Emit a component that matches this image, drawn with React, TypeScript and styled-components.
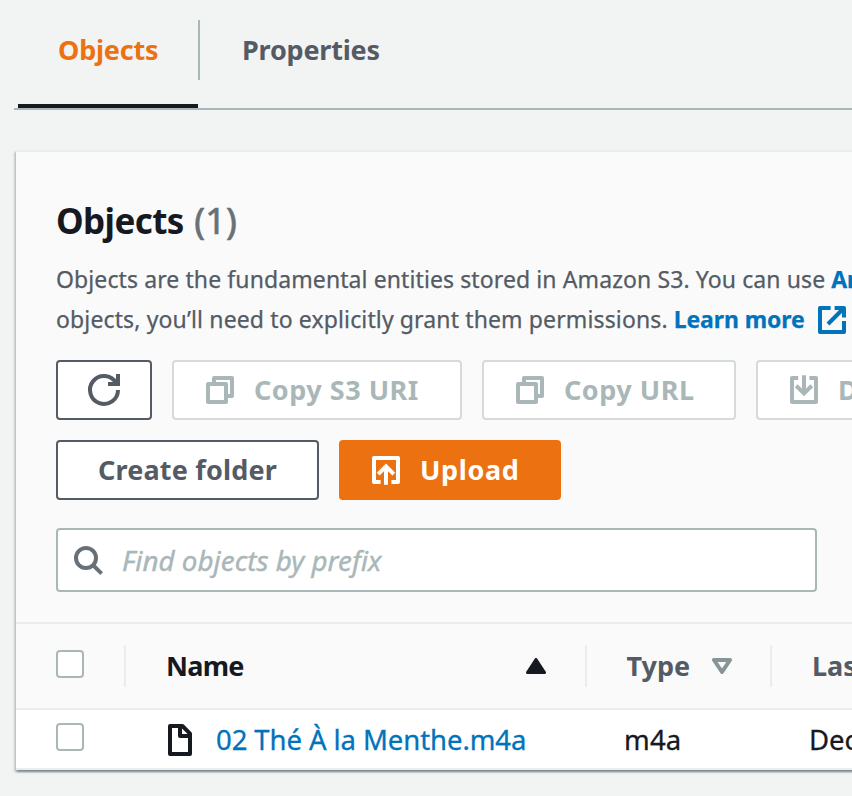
import React from "react";
import styled, { createGlobalStyle } from "styled-components";

const GlobalStyle = createGlobalStyle`
  *, *::before, *::after { box-sizing: border-box; }
  body {
    margin: 0;
    background: #f2f4f3;
    color: #16191f;
    font-family: "Noto Sans", "Open Sans", sans-serif;
    font-size: 27.5px;
    overflow: hidden;
  }
`;

const Page = styled.div`
  height: 796px;
  width: 100%;
  overflow: hidden;
`;

const TabBar = styled.nav`
  display: flex;
  height: 110px;
  margin-left: 14px;
  padding: 20px 0 0 4px;
  border-bottom: 2px solid #aab7b8;
`;

const Tab = styled.a<{ $active?: boolean }>`
  display: flex;
  flex-direction: column;
  justify-content: space-between;
  font-size: 27px;
  font-weight: 700;
  line-height: 60px;
  letter-spacing: -0.2px;
  color: ${(p) => (p.$active ? "#ec7211" : "#545b64")};
  width: ${(p) => (p.$active ? 180 : 220)}px;
  padding-left: ${(p) => (p.$active ? 0 : 44)}px;

  span {
    padding-left: ${(p) => (p.$active ? 40 : 0)}px;
  }

  &::after {
    content: "";
    height: 4px;
    background: ${(p) => (p.$active ? "#16191f" : "transparent")};
  }
`;

const TabDivider = styled.div`
  width: 2px;
  height: 60px;
  margin-right: -2px;
  background: #aab7b8;
`;

const Card = styled.section`
  width: 1000px;
  margin: 40px 0 0 16px;
  border-top: 2px solid #eaeded;
  background: #fafafa;
  box-shadow:
    0 2px 2px rgba(0, 28, 36, 0.3),
    2px 2px 2px rgba(0, 28, 36, 0.15),
    -2px 2px 2px rgba(0, 28, 36, 0.15);
`;

const CardHeader = styled.header`
  height: 472px;
  padding: 39px 0 0 40px;
  border-bottom: 2px solid #eaeded;
`;

const Heading = styled.h2`
  margin: 0 0 8px;
  font-size: 35px;
  line-height: 60px;
  font-weight: 700;
  letter-spacing: -0.6px;
`;

const Counter = styled.span`
  margin-left: 2px;
  font-size: 36px;
  line-height: 1;
  font-weight: 400;
  letter-spacing: 0.2px;
  color: #687078;
  -webkit-text-stroke: 0.7px currentColor;
`;

const Description = styled.p`
  margin: 0 0 21px;
  font-size: 23px;
  line-height: 40px;
  color: #545b64;
  white-space: nowrap;
  -webkit-text-stroke: 0.25px currentColor;
`;

const Line = styled.span<{ $spacing: number }>`
  display: flex;
  align-items: center;
  height: 40px;
  letter-spacing: ${(p) => p.$spacing}px;
`;

const TextLink = styled.a`
  margin-left: 6px;
  font-weight: 700;
  letter-spacing: -0.1px;
  color: #0073bb;
`;

const Glyph = styled.svg`
  flex: none;
  width: 32px;
  height: 32px;
  fill: none;
  stroke: currentColor;
  stroke-width: 2;
  overflow: visible;
`;

const ExternalGlyph = styled(Glyph)`
  margin: 2px 0 0 11px;
  color: #0073bb;
`;

const FileGlyph = styled(Glyph)`
  margin-top: 2px;
`;

const Actions = styled.div`
  display: flex;
  gap: 20px;
  margin-bottom: 20px;
`;

type Variant = "normal" | "disabled" | "primary";
const palette: Record<Variant, { border: string; text: string; fill: string }> = {
  normal: { border: "#545b64", text: "#545b64", fill: "#ffffff" },
  disabled: { border: "#d5dbdb", text: "#aab7b8", fill: "#ffffff" },
  primary: { border: "#ec7211", text: "#ffffff", fill: "#ec7211" },
};

const Button = styled.button<{ $variant: Variant; $width: number; $spacing?: number; $pad?: number }>`
  display: flex;
  flex: none;
  align-items: center;
  gap: 18px;
  width: ${(p) => p.$width}px;
  height: 60px;
  padding: 0 0 0 ${(p) => p.$pad ?? 30}px;
  border: 2px solid ${(p) => palette[p.$variant].border};
  border-radius: 4px;
  background: ${(p) => palette[p.$variant].fill};
  color: ${(p) => palette[p.$variant].text};
  font: inherit;
  font-size: 27px;
  font-weight: 700;
  letter-spacing: ${(p) => p.$spacing ?? 0.52}px;
  white-space: nowrap;

  span {
    line-height: 38px;
  }
`;

const SearchBox = styled.label`
  display: flex;
  align-items: center;
  gap: 18px;
  width: 761px;
  height: 64px;
  margin-top: 28px;
  padding-left: 14px;
  border: 2px solid #aab7b8;
  border-radius: 4px;
  background: #fff;
  color: #687078;
`;

const SearchInput = styled.input`
  flex: 1;
  height: 58px;
  padding: 0;
  border: 0;
  outline: 0;
  background: transparent;
  font: italic 400 27.8px "Noto Sans", sans-serif;

  &::placeholder {
    color: #aab7b8;
    opacity: 1;
    -webkit-text-stroke: 0.4px currentColor;
  }
`;

const GridRow = styled.div<{ $head?: boolean }>`
  display: grid;
  grid-template-columns: 110px 461px 185px 244px;
  align-items: center;
  height: ${(p) => (p.$head ? 86 : 60)}px;
  border-bottom: 2px solid #eaeded;
  background: ${(p) => (p.$head ? "#fafafa" : "#ffffff")};
  white-space: nowrap;
`;

const HeadCell = styled.div<{ $spacing?: number; $muted?: boolean; $pad: number }>`
  display: flex;
  align-items: center;
  justify-content: space-between;
  height: 42px;
  padding: 0 ${(p) => (p.$muted ? 38 : 39)}px 0 ${(p) => p.$pad}px;
  border-right: 2px solid #eaeded;
  font-size: 27px;
  font-weight: 700;
  letter-spacing: ${(p) => p.$spacing ?? 0}px;
  color: ${(p) => (p.$muted ? "#545b64" : "#16191f")};
`;

const HeadLabel = styled.span`
  padding-bottom: 2px;
`;

const Cell = styled.div<{ $spacing?: number; $pad: number }>`
  display: flex;
  align-items: center;
  height: 58px;
  padding-left: ${(p) => p.$pad}px;
  letter-spacing: ${(p) => p.$spacing ?? 0}px;
  -webkit-text-stroke: 0.3px currentColor;
`;

const ObjectLink = styled.a`
  margin-left: 20px;
  color: #0073bb;
`;

const Checkbox = styled.span`
  width: 28px;
  height: 28px;
  margin-bottom: 4px;
  border: 2px solid #aab7b8;
  border-radius: 4px;
  background: #fff;
`;

const SortGlyph = styled.svg<{ $muted?: boolean }>`
  width: 20px;
  height: 16px;
  color: ${(p) => (p.$muted ? "#879596" : "#16191f")};
`;

const CopyIcon = () => (
  <Glyph viewBox="0 0 16 16" strokeLinejoin="round">
    <path d="M2 5h9v9H2zM5 5V2h9v9h-3" />
  </Glyph>
);

export default function App() {
  return (
    <Page>
      <GlobalStyle />
      <TabBar>
        <Tab $active><span>Objects</span></Tab>
        <TabDivider />
        <Tab><span>Properties</span></Tab>
      </TabBar>
      <Card>
        <CardHeader>
          <Heading>Objects <Counter>(1)</Counter></Heading>
          <Description>
            <Line $spacing={0.1}>
              Objects are the fundamental entities stored in Amazon S3. You can use
              <TextLink>Amazon S3 inventory</TextLink>
            </Line>
            <Line $spacing={0.13}>
              objects, you’ll need to explicitly grant them permissions.
              <TextLink>Learn more</TextLink>
              <ExternalGlyph viewBox="0 0 16 16" strokeLinejoin="round">
                <path d="M7.3 2H2v12h12V8.5M9.3 2H14v4.7M6 10l8-8" />
              </ExternalGlyph>
            </Line>
          </Description>
          <Actions>
            <Button $variant="normal" $width={96} aria-label="Refresh">
              <Glyph viewBox="0 0 16 16">
                <path d="M15 8a7 7 0 1 1-1-3.6M10 5h5V0" />
              </Glyph>
            </Button>
            <Button $variant="disabled" $width={290}><CopyIcon /><span>Copy S3 URI</span></Button>
            <Button $variant="disabled" $width={254}><CopyIcon /><span>Copy URL</span></Button>
            <Button $variant="disabled" $width={240}>
              <Glyph viewBox="0 0 16 16" strokeLinejoin="round">
                <path d="M5.1 2H2v12h12V2h-3.3" />
                <path d="M8 .6V9M4.1 5.9L8 9.7l3.9-3.8" strokeLinejoin="miter" />
              </Glyph>
              <span>Download</span>
            </Button>
          </Actions>
          <Actions>
            <Button $variant="normal" $width={263} $spacing={0.18} $pad={40}><span>Create folder</span></Button>
            <Button $variant="primary" $width={222} $spacing={0.65} $pad={29}>
              <Glyph viewBox="0 0 16 16" strokeLinejoin="round">
                <path d="M5.3 14H2V2h12v12h-3.3" />
                <path d="M8 15.4V7M4.1 10.1L8 6.2l3.9 3.9" strokeLinejoin="miter" />
              </Glyph>
              <span>Upload</span>
            </Button>
          </Actions>
          <SearchBox>
            <Glyph viewBox="0 0 16 16">
              <circle cx="7" cy="7" r="5" />
              <path d="M10.4 10.4l4.4 4.4" />
            </Glyph>
            <SearchInput placeholder="Find objects by prefix" />
          </SearchBox>
        </CardHeader>
        <GridRow $head>
          <HeadCell $pad={40}><Checkbox /></HeadCell>
          <HeadCell $pad={40} $spacing={-0.7}>
            <HeadLabel>Name</HeadLabel>
            <SortGlyph viewBox="0 0 20 16">
              <path d="M10 1.5L18.5 14.5h-17z" fill="currentColor" stroke="currentColor" strokeWidth="3" strokeLinejoin="round" />
            </SortGlyph>
          </HeadCell>
          <HeadCell $pad={39.5} $muted>
            <HeadLabel>Type</HeadLabel>
            <SortGlyph $muted viewBox="0 0 20 16">
              <path d="M2 2h16l-8 12z" fill="none" stroke="currentColor" strokeWidth="4" strokeLinejoin="round" />
            </SortGlyph>
          </HeadCell>
          <HeadCell $pad={40} $muted><HeadLabel>Last modified</HeadLabel></HeadCell>
        </GridRow>
        <GridRow>
          <Cell $pad={40}><Checkbox /></Cell>
          <Cell $pad={38} $spacing={-0.08}>
            <FileGlyph viewBox="0 0 16 16" strokeLinejoin="round">
              <path d="M3 1h6.2L13 4.8V15H3zM8 1v5h5" />
            </FileGlyph>
            <ObjectLink>02 Thé À la Menthe.m4a</ObjectLink>
          </Cell>
          <Cell $pad={37} $spacing={0.2}>m4a</Cell>
          <Cell $pad={37}>December</Cell>
        </GridRow>
      </Card>
    </Page>
  );
}
